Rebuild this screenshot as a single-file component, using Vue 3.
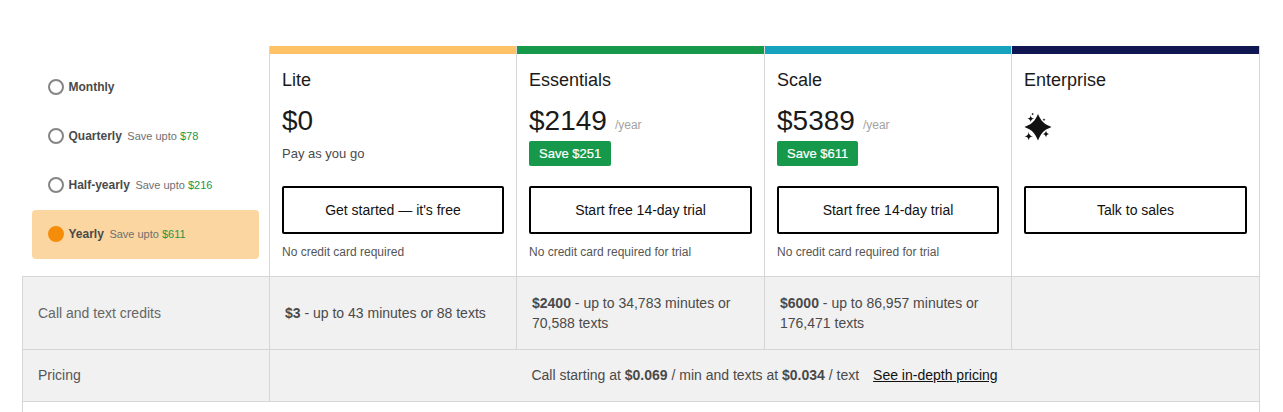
<script setup>
const options = [
  { label: 'Monthly', save: '' },
  { label: 'Quarterly', save: '$78' },
  { label: 'Half-yearly', save: '$216' },
  { label: 'Yearly', save: '$611', active: true },
]
const plans = [
  { name: 'Lite', color: '#ffc266', price: '$0', sub: 'Pay as you go', cta: 'Get started — it\'s free', note: 'No credit card required' },
  { name: 'Essentials', color: '#16994a', price: '$2149', per: '/year', badge: 'Save $251', cta: 'Start free 14-day trial', note: 'No credit card required for trial' },
  { name: 'Scale', color: '#17a2bd', price: '$5389', per: '/year', badge: 'Save $611', cta: 'Start free 14-day trial', note: 'No credit card required for trial' },
  { name: 'Enterprise', color: '#101652', sparkle: true, cta: 'Talk to sales', note: '' },
]
const credits = [
  { amount: '$3', text: ' - up to 43 minutes or 88 texts', more: '' },
  { amount: '$2400', text: ' - up to 34,783 minutes or', more: '70,588 texts' },
  { amount: '$6000', text: ' - up to 86,957 minutes or', more: '176,471 texts' },
  { amount: '', text: '', more: '' },
]
</script>

<template>
  <div class="page">
    <div class="table">
      <div class="options">
        <div v-for="o in options" :key="o.label" class="option" :class="{ active: o.active }">
          <span class="radio"></span>
          <span class="opt-label">{{ o.label }}</span>
          <span v-if="o.save" class="opt-save">Save upto <span class="green">{{ o.save }}</span></span>
        </div>
      </div>

      <div v-for="p in plans" :key="p.name" class="plan">
        <div class="bar" :style="{ background: p.color }"></div>
        <div class="plan-body">
          <div class="plan-name">{{ p.name }}</div>
          <div class="price-box">
            <svg v-if="p.sparkle" class="sparkle" viewBox="0 0 28 28" width="28" height="28" fill="#111">
              <path d="M14 1C17 8 20 11 27.500 14 20 17 17 20 14 27.500 11 20 8 17 .5 14 8 11 11 8 14 1Z" />
              <path d="M6.700 2.300C7 4.500 7.900 5.400 10.100 5.700 7.900 6 7 6.900 6.700 9.100 6.400 6.900 5.500 6 3.300 5.700 5.500 5.400 6.400 4.500 6.700 2.300Z" />
              <path d="M8.700 -.5C8.800 .4 9.300 .9 10.200 1 9.300 1.100 8.800 1.600 8.700 2.500 8.600 1.600 8.100 1.100 7.200 1 8.100 .9 8.600 .4 8.700 -.5Z" />
              <path d="M4.700 19C5 21.800 6.200 23 9 23.300 6.200 23.600 5 24.800 4.700 27.600 4.400 24.800 3.200 23.600 .4 23.300 3.200 23 4.400 21.800 4.700 19Z" />
              <path d="M22 17.500C22.300 19.700 23.300 20.700 25.500 21 23.300 21.300 22.300 22.300 22 24.500 21.700 22.300 20.700 21.300 18.500 21 20.700 20.700 21.700 19.700 22 17.500Z" />
              <path d="M20 5.200C20.100 6.100 20.600 6.600 21.500 6.700 20.600 6.800 20.100 7.300 20 8.200 19.900 7.300 19.400 6.800 18.500 6.700 19.400 6.600 19.900 6.100 20 5.200Z" />
            </svg>
            <template v-else>
              <div class="price-line">
                <span class="price">{{ p.price }}</span>
                <span v-if="p.per" class="per">{{ p.per }}</span>
              </div>
              <div v-if="p.sub" class="sub">{{ p.sub }}</div>
              <div v-if="p.badge" class="badge">{{ p.badge }}</div>
            </template>
          </div>
          <button class="cta">{{ p.cta }}</button>
          <div class="note">{{ p.note }}</div>
        </div>
      </div>

      <div class="row-head credits-row">Call and text credits</div>
      <div v-for="(c, i) in credits" :key="i" class="cell credits-row">
        <div>
          <div><b>{{ c.amount }}</b>{{ c.text }}</div>
          <div v-if="c.more">{{ c.more }}</div>
        </div>
      </div>

      <div class="row-head pricing-row">Pricing</div>
      <div class="cell pricing-row span4">
        <span>Call starting at <b>$0.069</b> / min and texts at <b>$0.034</b> / text</span>
        <a class="link">See in-depth pricing</a>
      </div>

      <div class="tail first"></div>
      <div class="tail span4"></div>
    </div>
  </div>
</template>

<style>
html, body { margin: 0; background: #fff; overflow: hidden; }
</style>

<style scoped>
.page {
  width: 1283px;
  height: 412px;
  overflow: hidden;
  padding: 46px 23px 0 22px;
  box-sizing: border-box;
  font-family: "Liberation Sans", Arial, sans-serif;
}
.table {
  display: grid;
  grid-template-columns: 247px 247px 248px 247px 249px;
  grid-template-rows: 230px 73px 52px 30px;
}
.options {
  padding: 16.5px 10px 0 10px;
  box-sizing: border-box;
  display: flex;
  flex-direction: column;
}
.option {
  height: 49px;
  display: flex;
  align-items: center;
  padding-left: 16px;
  border-radius: 4px;
  flex: none;
}
.option.active { background: #fcd6a0; }
.radio {
  width: 16px;
  height: 16px;
  box-sizing: border-box;
  border: 2px solid #858585;
  border-radius: 50%;
  margin-right: 4.5px;
  flex: none;
}
.active .radio { background: #f58d0b; border-color: #f58d0b; }
.opt-label { font-size: 12px; font-weight: 700; color: #4a4a4a; }
.opt-save { font-size: 11px; color: #6f6f6f; margin-left: 5.500px; }
.green { color: #16994a; }
.plan {
  display: flex;
  flex-direction: column;
  border-left: 1px solid #d6d6d6;
  min-width: 0;
}
.plan:nth-child(5) { border-right: 1px solid #d6d6d6; }
.bar { height: 8px; flex: none; }
.plan-body { padding: 16px 12px 0; flex: 1; display: flex; flex-direction: column; }
.plan-name { font-size: 18px; line-height: 21px; color: #1a1a1a; }
.price-box { height: 95px; padding-top: 11px; box-sizing: border-box; flex: none; }
.price-line { display: flex; align-items: center; height: 38px; line-height: 38px; }
.price { font-size: 28px; color: #1a1a1a; }
.per { font-size: 12px; line-height: 14px; color: #a3a3a3; margin: 8px 0 0 8px; }
.sub { font-size: 13px; line-height: 16px; color: #4a4a4a; margin-top: 6px; }
.badge {
  display: inline-block;
  height: 25px;
  line-height: 25px;
  padding: 0 10px;
  background: #16994a;
  color: #fff;
  font-size: 13px;
  font-weight: 400;
  border-radius: 2px;
  margin-top: 1px;
  -webkit-text-stroke: 0.2px #fff;
}
.sparkle { display: block; margin-top: 11px; }
.cta {
  width: 100%;
  height: 48px;
  box-sizing: border-box;
  border: 2px solid #000;
  border-radius: 2px;
  background: #fff;
  color: #111;
  font-family: inherit;
  font-size: 14px;
  padding: 0;
  flex: none;
}
.note { font-size: 12px; line-height: 14px; color: #555; margin-top: 11px; }
.row-head, .cell {
  background: #f1f1f1;
  border-top: 1px solid #d6d6d6;
  box-sizing: border-box;
  font-size: 14px;
  color: #4a4a4a;
  display: flex;
  align-items: center;
}
.row-head {
  border-left: 1px solid #d6d6d6;
  padding-left: 15px;
  color: #666;
}
.row-head.pricing-row { color: #555; padding-bottom: 1px; }
.cell { border-left: 1px solid #d6d6d6; padding: 0 15px; line-height: 20px; }
.cell:nth-child(10) { border-right: 1px solid #d6d6d6; }
.span4 { grid-column: span 4; }
.cell.pricing-row.span4 {
  justify-content: center;
  border-right: 1px solid #d6d6d6;
  gap: 14px;
  padding: 0 0 1px;
}
.cell b { color: #4a4a4a; }
.link { color: #111; text-decoration: underline; }
.tail { border-top: 1px solid #d6d6d6; box-sizing: border-box; }
.tail.first { border-left: 1px solid #d6d6d6; }
.tail.span4 { border-right: 1px solid #d6d6d6; }
</style>
